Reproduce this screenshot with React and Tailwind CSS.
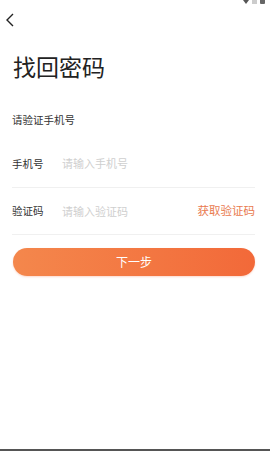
import React from "react";

export default function App() {
  const font = { fontFamily: '"Noto Sans CJK SC", "Noto Sans", sans-serif' };
  return (
    <div
      className="relative w-[270px] h-[451px] bg-white overflow-hidden flex flex-col"
      style={font}
    >
      {/* status bar icons (cut off) */}
      <div className="absolute top-0 right-[5px] flex items-start gap-[3px]">
        <svg width="6" height="4" viewBox="0 0 6 4">
          <path d="M0 0 H6 L3 4 Z" fill="#555" />
        </svg>
        <div className="w-[5px] h-[4px] bg-[#ccc]" />
        <div className="w-[5px] h-[4px] bg-[#666] rounded-b-[1px]" />
      </div>

      {/* back */}
      <div className="pt-[13px] pl-[5px] h-[27px]">
        <svg width="10" height="14" viewBox="0 0 10 14">
          <path d="M8 1 L2 7 L8 13" fill="none" stroke="#222" strokeWidth="1.4" />
        </svg>
      </div>

      {/* title */}
      <div className="mt-[25px] pl-[13px] text-[23px] leading-[28px] text-[#222]">
        找回密码
      </div>

      <div className="mt-[33px] pl-[12px] text-[10.5px] leading-[14px] text-[#333]">
        请验证手机号
      </div>

      <div className="mt-[13px] pl-[12px] pr-[15px] flex flex-col">
        <div className="h-[48px] flex items-center border-b border-[#f0f0f0]">
          <span className="w-[50px] text-[10.5px] text-[#333]">手机号</span>
          <span className="text-[11px] text-[#cfcfcf]">请输入手机号</span>
        </div>
        <div className="h-[47px] flex items-center border-b border-[#f0f0f0]">
          <span className="w-[50px] text-[10.5px] text-[#333]">验证码</span>
          <span className="flex-1 text-[11px] text-[#cfcfcf]">请输入验证码</span>
          <span className="text-[11.5px] text-[#e97a4e]">获取验证码</span>
        </div>
        <div className="mt-[13px] ml-[1px] h-[28px] rounded-full bg-gradient-to-r from-[#f4874c] to-[#f26939] flex items-center justify-center text-white text-[12px] shadow-[0_1px_2px_rgba(242,105,57,0.25)]">
          下一步
        </div>
      </div>

      <div className="absolute bottom-0 left-0 w-full h-[2px] bg-[#555]" />
    </div>
  );
}
